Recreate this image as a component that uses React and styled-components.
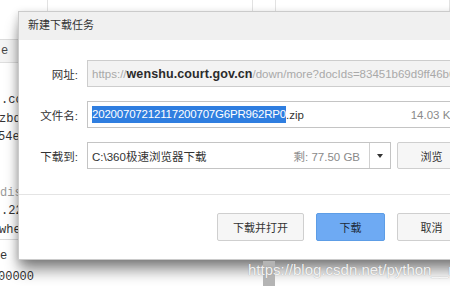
import React from 'react';
import styled, {createGlobalStyle} from 'styled-components';

const GlobalStyle = createGlobalStyle`
    html, body {
        margin: 0;
        padding: 0;
        width: 450px;
        height: 286px;
        overflow: hidden;
        background: #fff;
    }
    * { box-sizing: border-box; }
`;

const Screen = styled.div`
    position: relative;
    width: 450px;
    height: 286px;
    overflow: hidden;
    background: #fff;
    font-family: "Liberation Sans", "Noto Sans CJK SC", sans-serif;
`;

// the page behind the dialog
const TabStrip = styled.div`
    display: flex;
    height: 40px;
    border-bottom: 1px solid #dcdcdc;
`;

const TabCell = styled.div`
    width: ${p => p.w}px;
    flex: ${p => (p.w ? 'none' : 1)};
    border-right: 1px solid #e2e2e2;
`;

const HeaderRow = styled.div`
    height: 23px;
    background: #f4f4f4;
    border-bottom: 1px solid #dedede;
    font: 12px/22px "Liberation Mono", monospace;
    color: #444;
    padding-left: 1px;
`;

const Code = styled.div`
    padding-top: ${p => p.top || 0}px;
    border-top: ${p => (p.sep ? '1px solid #dcdcdc' : 'none')};
    font-family: "Liberation Mono", "DejaVu Sans Mono", monospace;
    font-size: 12px;
    line-height: ${p => p.lh}px;
    color: #333;
`;

const Line = styled.div`
    height: ${p => p.lh}px;
    white-space: pre;
    text-indent: ${p => p.indent || 0}px;
    color: ${p => (p.dim ? '#9a9a9a' : '#333')};
`;

const Watermark = styled.div`
    position: absolute;
    left: 248px;
    top: 261px;
    font: 15px "Liberation Sans", sans-serif;
    color: rgba(255, 255, 255, 0.9);
    text-shadow: 0 0 1px rgba(110, 110, 110, 0.7);
    white-space: nowrap;
    z-index: 3;
`;

const Caret = styled.div`
    position: absolute;
    left: 263px;
    top: 261px;
    width: 12px;
    height: 25px;
    background: #b4b4b4;
    z-index: 2;
`;

// dialog
const Dialog = styled.div`
    position: absolute;
    left: 18px;
    top: 11px;
    width: 462px;
    height: 249px;
    background: #fff;
    border: 1px solid #cbcbcb;
    box-shadow: 0 12px 14px -2px rgba(0, 0, 0, 0.45), 0 2px 8px rgba(0, 0, 0, 0.18);
    display: flex;
    flex-direction: column;
    z-index: 1;
`;

const TitleBar = styled.div`
    height: 28px;
    background: #f0f0f0;
    padding-left: 9px;
    font-size: 11px;
    line-height: 27px;
    color: #333;
`;

const Form = styled.div`
    display: flex;
    flex-direction: column;
    gap: 14px;
    padding: 20px 13px 0 0;
`;

const Row = styled.div`
    display: flex;
    align-items: center;
    gap: 6px;
`;

const Label = styled.div`
    width: 59px;
    margin-right: 3px;
    text-align: right;
    font-size: 11.5px;
    color: #333;
`;

const Field = styled.div`
    flex: 1;
    height: 27px;
    display: flex;
    align-items: center;
    border: 1px solid ${p => (p.muted ? '#cdcdcd' : '#c4c4c4')};
    background: ${p => (p.muted ? '#f3f3f3' : '#fff')};
    padding-left: 4px;
    font-size: 11.5px;
    color: #333;
    white-space: nowrap;
    overflow: hidden;
`;

const Grey = styled.span`
    color: #a9a9a9;
`;

const Host = styled.span`
    color: #2b2b2b;
    font-weight: 700;
    font-size: 12.5px;
    letter-spacing: 0.1px;
`;

const Selected = styled.span`
    background: #2f7ee0;
    color: #fff;
    padding: 2px 0 3px;
    letter-spacing: -0.2px;
`;

const Meta = styled.span`
    margin-left: auto;
    padding-right: ${p => p.pr}px;
    color: #8a8a8a;
`;

const DropArrow = styled.div`
    width: 21px;
    height: 100%;
    border-left: 1px solid #d0d0d0;
    display: flex;
    align-items: center;
    justify-content: center;
    &::after {
        content: '';
        border-left: 3px solid transparent;
        border-right: 3px solid transparent;
        border-top: 4px solid #333;
    }
`;

const Footer = styled.div`
    margin-top: auto;
    height: 65px;
    border-top: 1px solid #e4e4e4;
    display: flex;
    justify-content: flex-end;
    align-items: flex-start;
    gap: 12px;
    padding: 18px 13px 0 0;
`;

const Button = styled.div`
    width: ${p => p.w || 69}px;
    height: ${p => p.h || 28}px;
    display: flex;
    align-items: center;
    justify-content: center;
    border-radius: 2px;
    font-size: 11px;
    border: 1px solid ${p => (p.primary ? '#5d9de6' : '#cfcfcf')};
    background: ${p => (p.primary ? '#6eaaf3' : '#f6f6f6')};
    color: ${p => (p.primary ? '#1d2a3a' : '#333')};
`;

const topLines = [
    {t: '.co', i: 1}, {t: 'zbd9', i: -1}, {t: '54e1', i: -2},
    {t: ''}, {t: ''}, {t: 'dis', i: 0, dim: true}, {t: '.22', i: 1}, {t: 'where', i: -1},
];

const App = () => {
    return (
        <Screen>
            <GlobalStyle />
            <TabStrip>
                <TabCell w={48} />
                <TabCell w={205} />
                <TabCell w={23} />
                <TabCell />
            </TabStrip>
            <HeaderRow>e</HeaderRow>
            <Code top={28} lh={18.5}>
                {topLines.map(({t, i, dim}, k) => (
                    <Line key={k} lh={18.5} indent={i} dim={dim}>{t}</Line>
                ))}
            </Code>
            <Code sep top={6} lh={21}>
                <Line lh={21}>e</Line>
                <Line lh={21} indent={-2}>00000</Line>
            </Code>
            <Caret />
            <Watermark>https://blog.csdn.net/python__re</Watermark>

            <Dialog>
                <TitleBar>新建下载任务</TitleBar>
                <Form>
                    <Row>
                        <Label>网址:</Label>
                        <Field muted>
                            <Grey>https://</Grey>
                            <Host>wenshu.court.gov.cn</Host>
                            <Grey>/down/more?docIds=83451b69d9ff46b6a</Grey>
                        </Field>
                    </Row>
                    <Row>
                        <Label>文件名:</Label>
                        <Field>
                            <Selected>20200707212117200707G6PR962RP0</Selected>.zip
                            <Meta pr={7}>14.03 KB</Meta>
                        </Field>
                    </Row>
                    <Row>
                        <Label>下载到:</Label>
                        <Field>
                            C:\360极速浏览器下载
                            <Meta pr={9}>剩: 77.50 GB</Meta>
                            <DropArrow />
                        </Field>
                        <Button h={27}>浏览</Button>
                    </Row>
                </Form>
                <Footer>
                    <Button w={87}>下载并打开</Button>
                    <Button primary>下载</Button>
                    <Button>取消</Button>
                </Footer>
            </Dialog>
        </Screen>
    );
};

export default App;
